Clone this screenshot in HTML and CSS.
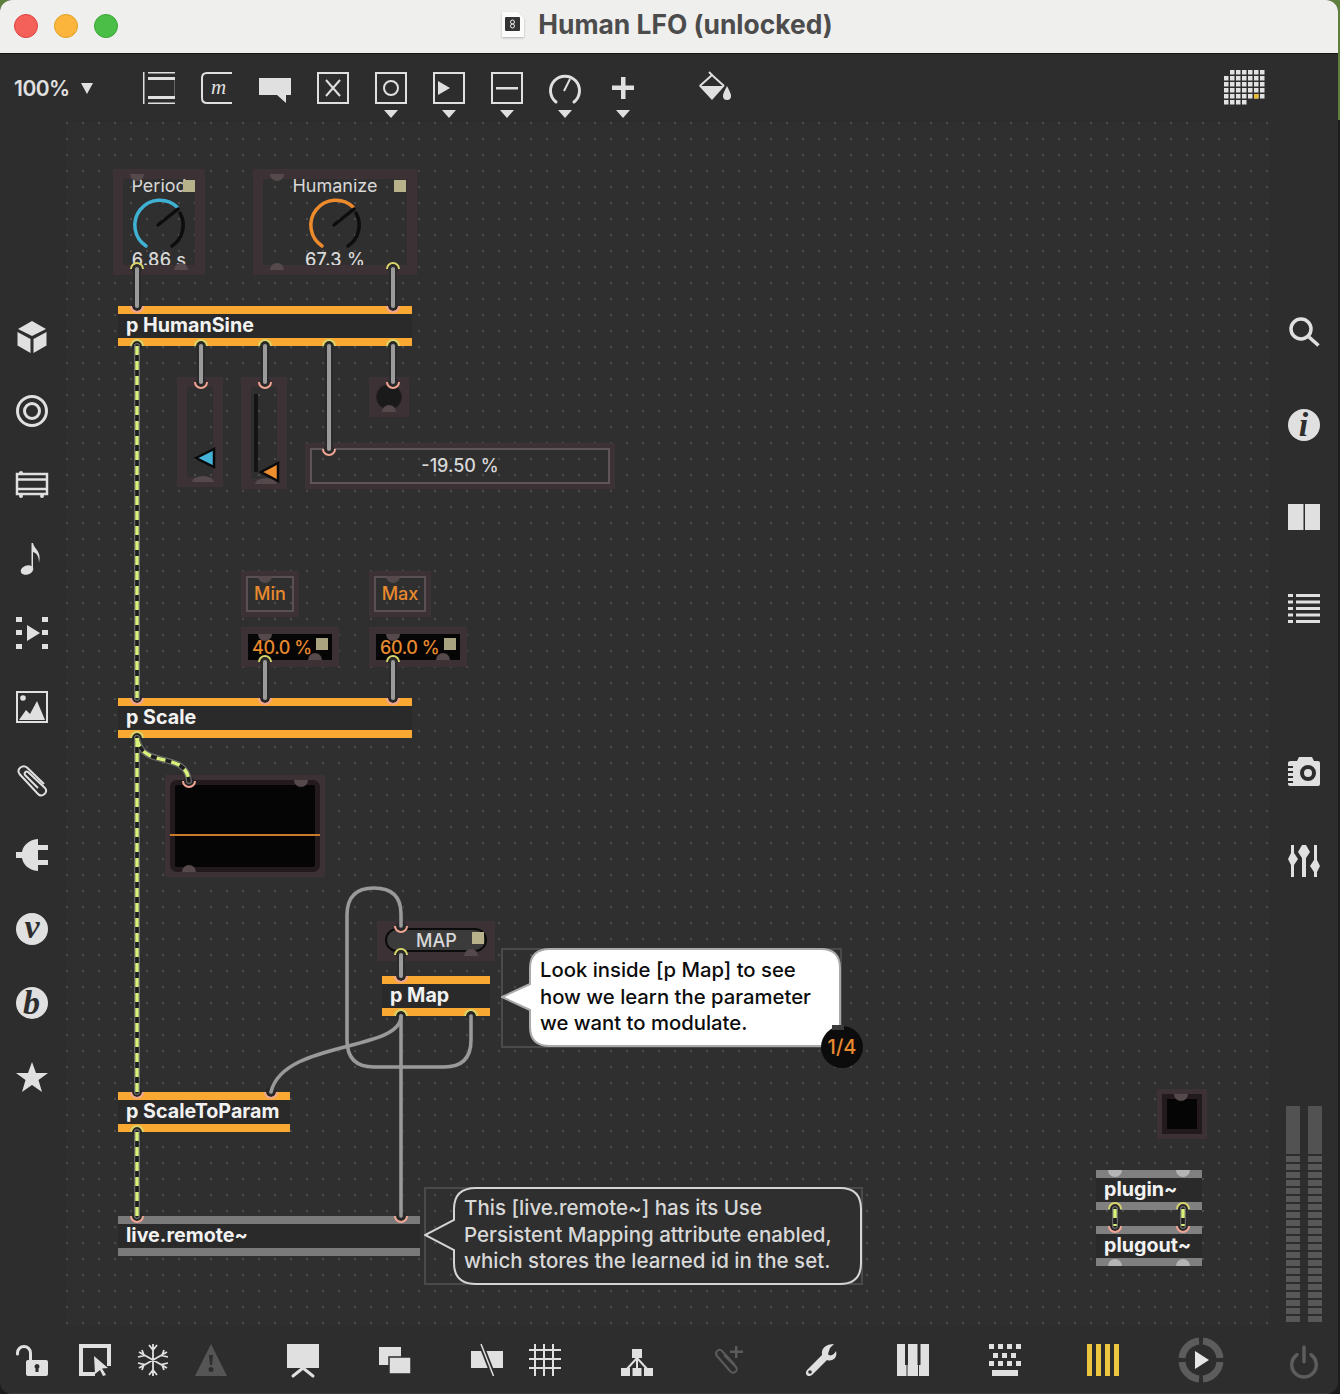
FILE: index.html
```html
<!DOCTYPE html>
<html lang="en">
<head>
    <meta charset="UTF-8">
    <title>Human LFO (unlocked)</title>
    <link rel="stylesheet" href="styles.css">
</head>
<body>
<div class="window">
    <div class="titlebar">
        <div class="lights">
            <span class="light red"></span>
            <span class="light yellow"></span>
            <span class="light green"></span>
        </div>
        <div class="title">
            <svg class="doc" viewBox="0 0 22 26"><path class="doc-page" d="M0 1H16L22 7V26H0Z"/><rect class="doc-dark" x="3" y="6" width="15" height="14" rx="1"/><circle class="doc-ring" cx="10.500" cy="11" r="2"/><circle class="doc-ring" cx="10.500" cy="15" r="2"/></svg>
            <span>Human LFO (unlocked)</span>
        </div>
    </div>

    <div class="toolbar">
        <div class="zoom"><span>100%</span><i class="zoom-arrow"></i></div>
        <div class="tool"><svg class="ico" viewBox="0 0 32 32"><rect width="1.5" height="32"/><rect x="5" width="27" height="1.5"/><rect x="5" y="5" width="27" height="3"/><rect x="5" y="24" width="27" height="3"/><rect x="5" y="30.500" width="27" height="1.500"/><rect class="dim" x="31" y="8" width="1" height="16"/></svg></div>
        <div class="tool"><svg class="ico" viewBox="0 0 32 32"><path class="line" d="M31 1H6Q1 1 1 6V26Q1 31 6 31H31"/><text class="glyph-m" x="10" y="22">m</text></svg></div>
        <div class="tool"><svg class="ico" viewBox="0 0 32 32"><path d="M0 6H32V23H27V31L18 23H0Z"/></svg></div>
        <div class="tool"><svg class="ico" viewBox="0 0 32 32"><rect class="line" x="1" y="1" width="30" height="30"/><path class="line" d="M9 8L23 24M23 8L9 24"/></svg></div>
        <div class="tool has-drop"><svg class="ico" viewBox="0 0 32 32"><rect class="line" x="1" y="1" width="30" height="30"/><circle class="line" cx="16" cy="16" r="7"/></svg><i class="drop"></i></div>
        <div class="tool has-drop"><svg class="ico" viewBox="0 0 32 32"><rect class="line" x="1" y="1" width="30" height="30"/><path d="M5 9L17 16L5 23Z"/></svg><i class="drop"></i></div>
        <div class="tool has-drop"><svg class="ico" viewBox="0 0 32 32"><rect class="line" x="1" y="1" width="30" height="30"/><rect x="5" y="15" width="22" height="2.500"/></svg><i class="drop"></i></div>
        <div class="tool has-drop"><svg class="ico" viewBox="0 0 32 32"><path class="line-thick" d="M7 30A14.500 14.500 0 1 1 25 30"/><path class="line" d="M15 19L21 7"/></svg><i class="drop"></i></div>
        <div class="tool has-drop"><svg class="ico" viewBox="0 0 32 32"><rect x="14" y="5" width="4.500" height="22"/><rect x="5" y="13.500" width="22" height="4.500"/></svg><i class="drop"></i></div>
        <div class="tool far"><svg class="ico" viewBox="0 0 32 32"><path class="line" d="M0.800 14L13 3L25 14"/><path d="M0 14H25.500L13 28Z"/><path d="M10 0L13 3" class="line"/><path d="M28 14C25 20 24 22 24 24A4 4 0 0 0 32 24C32 22 31 20 28 14Z"/></svg></div>
        <svg class="dots-grid" viewBox="0 0 40 37">
            <defs><pattern id="cells" width="6" height="6" patternUnits="userSpaceOnUse"><rect width="4.500" height="4.500"/></pattern></defs>
            <rect class="cells" x="6" y="0" width="36" height="6"/>
            <rect class="cells" x="0" y="6" width="42" height="24"/>
            <rect class="cells" x="0" y="30" width="24" height="6"/>
            <rect class="cell-on" x="30" y="24" width="4.500" height="4.500"/>
        </svg>
    </div>

    <div class="middle">
        <div class="side-left">
            <svg class="ico" viewBox="0 0 32 32"><path d="M16 0L30 8L16 15L2 8ZM1.500 11L14.500 18V32L1.500 24.500ZM30.500 11V24.500L17.500 32V18Z"/></svg>
            <svg class="ico" viewBox="0 0 32 32"><circle class="line-thick" cx="16" cy="16" r="14.500"/><circle class="line-thick" cx="16" cy="16" r="7.500"/></svg>
            <svg class="ico" viewBox="0 0 32 32"><rect class="line-film" x="1" y="5" width="30" height="20"/><path class="line-film" d="M2 10.500H30M2 20H30"/><circle cx="5" cy="4" r="2"/><circle cx="5" cy="27" r="2"/><circle cx="26" cy="27" r="2"/></svg>
            <svg class="ico" viewBox="0 0 32 32"><ellipse cx="11" cy="27" rx="6.500" ry="4.500" transform="rotate(-20 11 27)"/><path d="M15.500 0H17C18 6 26 8 23 20C23 12 20 10 17 9V27H15.500Z"/></svg>
            <svg class="ico" viewBox="0 0 32 32"><path d="M0 0H6V5H0ZM0 13H6V18H0ZM0 27H6V32H0ZM26 0H32V5H26ZM26 13H32V18H26ZM26 27H32V32H26ZM11 8L24 16L11 24Z"/></svg>
            <svg class="ico" viewBox="0 0 32 32"><rect class="line" x="1" y="1" width="30" height="30"/><circle cx="7" cy="7" r="2.800"/><path d="M3 29L10 19L14 23L21 10L29 29Z"/></svg>
            <svg class="ico" viewBox="0 0 32 32"><path class="line" d="M28 19L11 2.500C7 -1 0 4 3.500 9L22 29C26 33 33 27 29 23L12 7C10 5.500 7.500 8 9 10L22 23"/></svg>
            <svg class="ico" viewBox="0 0 32 32"><path d="M0 13H6C7 7 12 1 22 0V32C12 31 7 25 6 19H0ZM22 6H32V11H22ZM22 21H32V26H22Z"/></svg>
            <svg class="ico" viewBox="0 0 32 32"><circle cx="16" cy="16" r="16"/><text class="glyph-cut" x="16" y="25">v</text></svg>
            <svg class="ico" viewBox="0 0 32 32"><circle cx="16" cy="16" r="16"/><text class="glyph-cut" x="15.500" y="27">b</text></svg>
            <svg class="ico" viewBox="0 0 32 32"><path d="M16 1L20 12H32L22.500 19L26 31L16 24L6 31L9.500 19L0 12H12Z"/></svg>
        </div>

        <div class="canvas">
            <div class="patch">
                <div class="frame dial-box period">
                    <span class="dial-label">Period</span>
                    <svg class="dial" viewBox="0 0 56 56"><path class="arc-off" d="M49 16A25 25 0 0 1 41 49"/><path class="arc-blue" d="M15 49A25 25 0 1 1 46 10"/><path class="needle" d="M27 28L47 12"/></svg>
                    <span class="dial-value">6.86 s</span>
                    <i class="param-dot"></i>
                </div>
                <div class="frame dial-box humanize">
                    <span class="dial-label">Humanize</span>
                    <svg class="dial" viewBox="0 0 56 56"><path class="arc-off" d="M49 16A25 25 0 0 1 41 49"/><path class="arc-orange" d="M15 49A25 25 0 1 1 46 10"/><path class="needle" d="M27 28L47 12"/></svg>
                    <span class="dial-value">67.3 %</span>
                    <i class="param-dot"></i>
                </div>

                <div class="obj orange humansine">p HumanSine</div>

                <div class="frame slider-a"></div>
                <div class="frame slider-b"><i class="slider-track"></i></div>
                <div class="frame toggle"><i class="toggle-dot"></i></div>
                <div class="numbox percent">-19.50 %</div>

                <div class="msg min">Min</div>
                <div class="msg max">Max</div>
                <div class="numdark low"><span>40.0 %</span><i class="param-dot dark"></i></div>
                <div class="numdark high"><span>60.0 %</span><i class="param-dot dark"></i></div>

                <div class="obj orange scale">p Scale</div>

                <div class="scope"><div class="scope-mid"><div class="scope-in"></div></div><i class="scope-line"></i></div>

                <div class="map-box"><div class="map-pill">MAP<i class="param-dot map"></i></div></div>
                <div class="obj orange pmap">p Map</div>
                <div class="obj orange toparam">p ScaleToParam</div>
                <div class="obj grey remote">live.remote~</div>

                <div class="note note-white">
                    <svg class="note-shape" viewBox="0 0 341 100"><path class="note-fill" d="M49 1H320Q339 1 339 20V79Q339 98 320 98H49Q29 98 29 79V62L1 49L29 36V20Q29 1 49 1Z"/></svg>
                    <p>Look inside [p Map] to see<br>how we learn the parameter<br>we want to modulate.</p>
                </div>
                <div class="badge">1/4</div>

                <div class="note note-dark">
                    <svg class="note-shape" viewBox="0 0 439 98"><path class="note-line" d="M52 1H416Q437 1 437 22V76Q437 97 416 97H52Q30 97 30 76V63L1 48L30 33V22Q30 1 52 1Z"/></svg>
                    <p>This [live.remote~] has its Use<br>Persistent Mapping attribute enabled,<br>which stores the learned id in the set.</p>
                </div>

                <div class="empty-obj"><div class="empty-in"></div></div>
                <div class="obj grey pale-bar plugin">plugin~</div>
                <div class="obj grey pale-bar plugout">plugout~</div>

                <svg class="wires" viewBox="0 0 1340 1394">
                    <defs>
                        <path id="nub-down" d="M-7 0A7 7 0 0 0 7 0Z"/>
                        <path id="nub-up" d="M-7 0A7 7 0 0 1 7 0Z"/>
                        <path id="nub-wide" d="M-11 0A11 6 0 0 1 11 0Z"/>
                        <g id="in"><circle r="5"/><path class="arc-in" d="M-6 0A6 6 0 0 0 6 0"/></g>
                        <g id="out"><circle r="5"/><path class="arc-out" d="M-6 0A6 6 0 0 1 6 0"/></g>
                        <g id="grey-cords">
                            <path d="M137 269V306"/><path d="M393 269V306"/>
                            <path d="M201 346V382"/><path d="M265 346V382"/>
                            <path d="M329 346V449"/><path d="M393 346V382"/>
                            <path d="M265 662V698"/><path d="M393 662V698"/>
                            <path d="M401 955V976"/>
                        </g>
                        <g id="thin-cords">
                            <path d="M401 926V914Q401 888 374 888Q347 888 347 915V1040Q347 1067 374 1067H444Q471 1067 471 1040V1016"/>
                            <path d="M401 1016C401 1052 283 1040 271 1092"/>
                            <path d="M401 1016V1216"/>
                        </g>
                        <g id="signal-cords">
                            <path d="M137 346V698"/>
                            <path d="M137 738V1092"/>
                            <path d="M137 738C142 770 186 750 189 781"/>
                            <path d="M137 1132V1216"/>
                            <path d="M1115 1209V1226"/>
                            <path d="M1183 1209V1226"/>
                        </g>
                    </defs>

                    <g class="nubs">
                        <use href="#nub-down" x="137" y="174"/><use href="#nub-up" x="181" y="270"/>
                        <use href="#nub-down" x="277" y="174"/><use href="#nub-up" x="277" y="270"/>
                        <use href="#nub-wide" x="203" y="482"/><use href="#nub-wide" x="266" y="484"/>
                        <use href="#nub-up" x="389" y="412"/>
                        <use href="#nub-down" x="265" y="576"/><use href="#nub-down" x="393" y="576"/>
                        <use href="#nub-down" x="265" y="634"/><use href="#nub-up" x="315" y="660"/>
                        <use href="#nub-down" x="393" y="634"/><use href="#nub-up" x="443" y="660"/>
                        <use href="#nub-down" x="301" y="780"/><use href="#nub-up" x="189" y="872"/>
                        <use href="#nub-up" x="471" y="956"/>
                        <use href="#nub-down" x="1181" y="1094"/>
                    </g>
                    <g class="nubs pale">
                        <use href="#nub-down" x="1115" y="1170"/><use href="#nub-down" x="1183" y="1170"/>
                        <use href="#nub-up" x="1115" y="1266"/><use href="#nub-up" x="1183" y="1266"/>
                    </g>

                    <g class="triangles">
                        <path class="tri-blue" d="M196 458L214 449V467Z"/>
                        <path class="tri-orange" d="M261 472L278 463V481Z"/>
                    </g>

                    <g class="ports">
                        <use href="#out" x="137" y="269"/><use href="#out" x="393" y="269"/>
                        <use href="#in" x="137" y="306"/><use href="#in" x="393" y="306"/>
                        <use href="#out" x="137" y="346"/><use href="#out" x="201" y="346"/><use href="#out" x="265" y="346"/><use href="#out" x="329" y="346"/><use href="#out" x="393" y="346"/>
                        <use href="#in" x="201" y="382"/><use href="#in" x="265" y="382"/><use href="#in" x="393" y="382"/>
                        <use href="#in" x="329" y="449"/>
                        <use href="#out" x="265" y="662"/><use href="#out" x="393" y="662"/>
                        <use href="#in" x="137" y="698"/><use href="#in" x="265" y="698"/><use href="#in" x="393" y="698"/>
                        <use href="#out" x="137" y="738"/>
                        <use href="#in" x="189" y="781"/>
                        <use href="#in" x="401" y="926"/><use href="#out" x="401" y="955"/>
                        <use href="#in" x="401" y="976"/>
                        <use href="#out" x="401" y="1016"/><use href="#out" x="471" y="1016"/>
                        <use href="#in" x="137" y="1092"/><use href="#in" x="271" y="1092"/>
                        <use href="#out" x="137" y="1132"/>
                        <use href="#in" x="137" y="1216"/><use href="#in" x="401" y="1216"/>
                        <use href="#out" x="1115" y="1209"/><use href="#out" x="1183" y="1209"/>
                        <use href="#in" x="1115" y="1226"/><use href="#in" x="1183" y="1226"/>
                    </g>

                    <use class="cord-edge" href="#grey-cords"/>
                    <use class="cord-core" href="#grey-cords"/>
                    <use class="thin-edge" href="#thin-cords"/>
                    <use class="thin-core" href="#thin-cords"/>
                    <use class="signal-edge" href="#signal-cords"/>
                    <use class="signal-base" href="#signal-cords"/>
                    <use class="signal-dash" href="#signal-cords"/>
                </svg>
            </div>
        </div>

        <div class="side-right">
            <svg class="ico" viewBox="0 0 32 32"><circle class="line-search" cx="13" cy="12" r="10"/><path class="line-search" d="M21 20L30.500 28.500"/></svg>
            <svg class="ico" viewBox="0 0 32 32"><circle cx="16" cy="16" r="16"/><text class="glyph-cut" x="15.500" y="27">i</text></svg>
            <svg class="ico" viewBox="0 0 32 32"><path d="M0 3H15.500V29H0ZM17 3H32V29H17Z"/></svg>
            <svg class="ico" viewBox="0 0 32 32"><path d="M0 1H5V4H0ZM8 1H32V4H8ZM0 7.500H5V10.500H0ZM8 7.500H32V10.500H8ZM0 14H5V17H0ZM8 14H32V17H8ZM0 20.500H5V23.500H0ZM8 20.500H32V23.500H8ZM0 27H5V30H0ZM8 27H32V30H8Z"/></svg>
            <svg class="ico camera" viewBox="0 0 32 32"><path fill-rule="evenodd" d="M3 6H9L11 2H24L26 6H30Q32 6 32 8V29Q32 31 30 31H2Q0 31 0 29V8Q0 6 3 6ZM0 11V13H5V11ZM0 16V18H5V16ZM0 21V23H5V21ZM0 26V28H5V26ZM20 10A8 8 0 1 0 20 26A8 8 0 1 0 20 10ZM20 14A4 4 0 1 1 20 22A4 4 0 1 1 20 14Z"/></svg>
            <svg class="ico mixer" viewBox="0 0 32 32"><path d="M3 0H6V8L10 14L6 20V32H3V20L0 14L3 8ZM15 0H18L22 7L18 13V32H14V13L10 7L14 0ZM26 0H29V15L32 21L29 27V32H26V27L22 21L26 15Z"/></svg>
            <div class="meter">
                <div class="meter-col"><div class="meter-top"></div><div class="meter-segs"></div></div>
                <div class="meter-col"><div class="meter-top"></div><div class="meter-segs"></div></div>
            </div>
        </div>
    </div>

    <div class="bottombar">
        <svg class="ico" viewBox="0 0 32 32"><path class="line-thick" d="M1.500 10V9A6.500 6.500 0 0 1 14.500 9V18"/><path fill-rule="evenodd" d="M12 16H30Q32 16 32 18V30Q32 32 30 32H12Q10 32 10 30V18Q10 16 12 16ZM21 20A2.500 2.500 0 0 0 19.500 24.500V28H22.500V24.500A2.500 2.500 0 0 0 21 20Z"/></svg>
        <svg class="ico after-lock" viewBox="0 0 32 32"><path d="M0 0H32V22H28V4H4V28H16V32H0Z"/><path d="M15 12L29 24L23 24.500L27 31L24 32L21 26L16 30Z"/></svg>
        <svg class="ico" viewBox="0 0 32 32"><path class="line-snow" d="M16 0V32M2 8L30 24M2 24L30 8M12 1L16 6L20 1M12 31L16 26L20 31M1 13L7 11.500L5 6M31 19L25 20.500L27 26M1 19L7 20.500L5 26M31 13L25 11.500L27 6"/></svg>
        <svg class="ico muted-dark" viewBox="0 0 32 32"><path fill-rule="evenodd" d="M16 0L32 32H0ZM14 11L15 21H17L18 11ZM16 23A2.500 2.500 0 1 0 16 28A2.500 2.500 0 1 0 16 23Z"/></svg>
        <svg class="ico far" viewBox="0 0 32 32"><path d="M0 0H32V24H0Z"/><path class="line-thick" d="M16 24L6 32M16 24L26 32"/></svg>
        <svg class="ico far" viewBox="0 0 32 32"><path d="M0 3H22V21H0Z"/><path class="halo" d="M10 13H32V30H10Z"/></svg>
        <svg class="ico far" viewBox="0 0 32 32"><rect y="7" width="32" height="17"/><path class="slash-halo" d="M10 0L22.500 32"/><path class="line-slash" d="M10 0L22.500 32"/></svg>
        <svg class="ico" viewBox="0 0 32 32"><path class="line" d="M0 6H32M0 15H32M0 24H32M6 0V32M15 0V32M24 0V32" /></svg>
        <svg class="ico far" viewBox="0 0 32 32"><path d="M11 5H21V14H11ZM0 24H9V32H0ZM11.500 24H20.500V32H11.500ZM23 24H32V32H23Z"/><path class="line" d="M16 12V26M16 14L5 26M16 14L27 26"/></svg>
        <svg class="ico muted far" viewBox="0 0 32 32"><path class="line" d="M22 21L9 7C6 4 1 8 4 12L17 27C20 31 26 27 23 23L11 11"/><rect x="22" y="2" width="2.500" height="12"/><rect x="17" y="6.500" width="13" height="2.500"/></svg>
        <svg class="ico far" viewBox="0 0 32 32"><path d="M31 7C29 11 25 13 23 10L25 4L29 0C21 0 16 4 17 11L2 26C-1 30 3 34 7 31L22 16C27 18 33 14 31 7Z"/><circle class="hole" cx="5" cy="28" r="1.800"/></svg>
        <svg class="ico far" viewBox="0 0 32 32"><rect width="32" height="32"/><path class="slot" d="M9.500 0V21M22 0V21"/><path class="slot-thin" d="M10 21V32M21.500 21V32"/></svg>
        <svg class="ico far" viewBox="0 0 32 32"><path d="M0 0H5V5H0ZM9 0H14V5H9ZM18 0H23V5H18ZM27 0H32V5H27ZM4 9H9V14H4ZM13 9H18V14H13ZM22 9H27V14H22ZM0 17H5V22H0ZM9 17H14V22H9ZM18 17H23V22H18ZM27 17H32V22H27ZM3 26H29V32H3Z"/></svg>
        <svg class="ico bars far-more" viewBox="0 0 32 32"><path d="M0 0H5V32H0ZM9 0H14V32H9ZM18 0H23V32H18ZM27 0H32V32H27Z"/></svg>
        <svg class="ico play" viewBox="0 0 46 46"><path class="ring" d="M21 4A19 19 0 0 0 4 21M25 4A19 19 0 0 1 42 21M4 25A19 19 0 0 0 21 42M42 25A19 19 0 0 1 25 42"/><path class="play-tri" d="M17 14L31 23L17 32Z"/></svg>
        <svg class="ico power" viewBox="0 0 32 32"><path class="line-power" d="M8 10A14 14 0 1 0 24 10M16 1V18"/></svg>
    </div>
</div>
</body>
</html>
```

FILE: styles.css
```css
* {
    box-sizing: border-box;
}
html, body {
    margin: 0;
    height: 100%;
}
body {
    width: 1340px;
    height: 1394px;
    overflow: hidden;
    background: linear-gradient(#5f7f3c 0 120px, #1d1d1d 120px);
    font-family: Inter, "Liberation Sans", sans-serif;
}
.window {
    width: 1338px;
    height: 1394px;
    display: flex;
    flex-direction: column;
    background: #2d2d2d;
    border-radius: 12px;
    overflow: hidden;
}

/* title bar */
.titlebar {
    flex: none;
    height: 54px;
    position: relative;
    display: flex;
    align-items: center;
    justify-content: center;
    background: #efefed;
    border-bottom: 1px solid #141414;
}
.lights {
    position: absolute;
    left: 14px;
    top: 14px;
    display: flex;
    gap: 16px;
}
.light {
    width: 24px;
    height: 24px;
    border-radius: 50%;
}
.red { background: #f4605a; border: 1px solid #e0443e; }
.yellow { background: #fbb53c; border: 1px solid #dfa023; }
.green { background: #4bbe47; border: 1px solid #3aa637; }
.title {
    display: flex;
    align-items: center;
    gap: 14px;
    margin: -5px 0 0 -3px;
    font-size: 26.400px;
    font-weight: 700;
    color: #4c4c4c;
}
.doc {
    flex: none;
    width: 22px;
    height: 26px;
    filter: drop-shadow(0 1px 1px rgba(0, 0, 0, 0.25));
}
.doc-page { fill: #fbfbfb; }
.doc-dark { fill: #333; }
.doc-ring { fill: none; stroke: #e8e8e8; stroke-width: 1; }

/* icons */
.ico {
    flex: none;
    width: 32px;
    height: 32px;
    fill: #e0e0e0;
    overflow: visible;
}
.line, .line-thick, .line-film, .line-search, .line-snow, .line-power, .line-slash {
    fill: none;
    stroke: #e0e0e0;
    stroke-width: 2;
}
.line-thick { stroke-width: 3; stroke-linecap: round; }
.line-film { stroke-width: 2.500; }
.line-search { stroke-width: 3.500; }
.line-snow { stroke-width: 1.800; }
.line-power { stroke: #5d5d5d; stroke-width: 4; stroke-linecap: round; }
.line-slash { stroke-width: 1.500; }
.slash-halo { fill: none; stroke: #2d2d2d; stroke-width: 5; }
.halo { stroke: #2d2d2d; stroke-width: 1.500; }
.slot { fill: none; stroke: #2d2d2d; stroke-width: 3; }
.slot-thin { fill: none; stroke: #2d2d2d; stroke-width: 1; }
.dim { fill: #666; }
.hole { fill: #2d2d2d; }
.glyph-m {
    font-family: "Liberation Serif", serif;
    font-style: italic;
    font-size: 21px;
}
.glyph-cut {
    font-family: "Liberation Serif", serif;
    font-style: italic;
    font-weight: 700;
    font-size: 34px;
    text-anchor: middle;
    fill: #2d2d2d;
}
.muted { fill: #5b5b5b; }
.muted .line { stroke: #5b5b5b; }
.muted-dark { fill: #555; }
.bars { fill: #ebc63e; }
.ring { fill: none; stroke: #5c5c5c; stroke-width: 7; }
.play-tri { fill: #e6e6e6; }

/* top toolbar */
.toolbar {
    flex: none;
    height: 68px;
    display: flex;
    gap: 26px;
    padding: 18px 0 0 14px;
}
.zoom {
    width: 103px;
    height: 32px;
    display: flex;
    align-items: center;
    gap: 11px;
    font-size: 21px;
    font-weight: 600;
    letter-spacing: -0.5px;
    color: #e0e0e0;
}
.zoom-arrow {
    width: 0;
    height: 0;
    border-left: 6px solid transparent;
    border-right: 6px solid transparent;
    border-top: 11px solid #e0e0e0;
}
.tool {
    width: 32px;
    display: flex;
    flex-direction: column;
    align-items: center;
    gap: 6px;
}
.tool.far {
    margin-left: 34px;
}
.drop {
    width: 0;
    height: 0;
    border-left: 7px solid transparent;
    border-right: 7px solid transparent;
    border-top: 8px solid #e0e0e0;
}
.dots-grid {
    width: 40px;
    height: 37px;
    margin: -2px 74px 0 auto;
    overflow: visible;
}
.cells { fill: url(#cells); }
#cells rect { fill: #e2e2e2; }
.cell-on { fill: #e8bd34; }

/* middle row */
.middle {
    flex: none;
    height: 1204px;
    display: flex;
}
.side-left {
    flex: none;
    width: 66px;
    display: flex;
    flex-direction: column;
    gap: 42px;
    padding: 199px 0 0 16px;
}
.side-right {
    flex: none;
    width: 68px;
    display: flex;
    flex-direction: column;
    gap: 60px;
    padding: 195px 0 4px 18px;
}
.camera { margin-top: 70px; }
.mixer { margin-top: -2px; }
.meter {
    margin: auto 0 0 -2px;
    display: flex;
    gap: 8px;
}
.meter-col {
    width: 14px;
    height: 216px;
    display: flex;
    flex-direction: column;
    gap: 2px;
}
.meter-top {
    height: 48px;
    background: #525252;
}
.meter-segs {
    flex: 1;
    background: repeating-linear-gradient(#585858 0 6px, transparent 6px 8px);
}

/* patcher canvas */
.canvas {
    flex: none;
    width: 1204px;
    position: relative;
    background-color: #2f2f2f;
    background-image: radial-gradient(circle at 1px 1px, #4c4c4c 1px, transparent 1.300px);
    background-size: 16px 16px;
}
.patch {
    position: absolute;
    left: -66px;
    top: -122px;
    width: 1340px;
    height: 1394px;
    font-size: 18px;
    font-weight: 500;
    color: #d8d8d8;
}
.patch > div {
    position: absolute;
}
.wires {
    position: absolute;
    left: 0;
    top: 0;
    width: 1340px;
    height: 1394px;
    pointer-events: none;
}
.frame {
    border: 10px solid #3c3134;
}

/* dials */
.dial-box {
    top: 169px;
    height: 106px;
    display: flex;
    flex-direction: column;
    align-items: center;
    overflow: hidden;
}
.period { left: 113px; width: 92px; }
.humanize { left: 253px; width: 164px; }
.dial-label {
    flex: none;
    height: 13px;
    line-height: 13px;
    font-weight: 400;
}
.dial {
    flex: none;
    width: 56px;
    height: 56px;
    margin: 5px 0 -4px;
    overflow: visible;
}
.dial-value {
    flex: none;
    height: 16px;
    line-height: 16px;
    margin-top: 3px;
    letter-spacing: 0.3px;
}
.arc-off, .arc-blue, .arc-orange {
    fill: none;
    stroke-width: 3.500;
    stroke-linecap: round;
}
.arc-off { stroke: #0d0d0d; }
.arc-blue { stroke: #3fb2d4; }
.arc-orange { stroke: #ec8a2c; }
.needle {
    fill: none;
    stroke: #0d0d0d;
    stroke-width: 3.500;
    stroke-linecap: round;
}
.param-dot {
    position: absolute;
    width: 12px;
    height: 12px;
    background: #b7b28a;
}
.period .param-dot { left: 60px; top: 1px; }
.humanize .param-dot { left: 131px; top: 1px; }

/* patcher objects */
.obj {
    height: 40px;
    padding-left: 8px;
    line-height: 22px;
    font-size: 19.700px;
    font-weight: 700;
    color: #f2f2f2;
    background: #2a2a2a;
}
.orange {
    border-top: 8px solid #f9a832;
    border-bottom: 8px solid #f9a832;
}
.grey {
    border-top: 8px solid #7a7a7a;
    border-bottom: 8px solid #7a7a7a;
}
.pale-bar {
    border-color: #808080;
}
.humansine { left: 118px; top: 306px; width: 294px; }
.scale { left: 118px; top: 698px; width: 294px; }
.pmap { left: 382px; top: 976px; width: 108px; }
.toparam { left: 118px; top: 1092px; width: 172px; }
.remote { left: 118px; top: 1216px; width: 302px; }
.plugin { left: 1096px; top: 1170px; width: 106px; }
.plugout { left: 1096px; top: 1226px; width: 106px; }

/* sliders, toggle, number */
.slider-a { left: 177px; top: 377px; width: 46px; height: 110px; }
.slider-b { left: 241px; top: 377px; width: 46px; height: 112px; }
.slider-track {
    display: block;
    width: 4px;
    height: 78px;
    margin: 7px 0 0 3px;
    background: #141414;
}
.toggle { left: 369px; top: 377px; width: 40px; height: 40px; }
.toggle-dot {
    display: block;
    width: 26px;
    height: 26px;
    margin: -3px;
    border-radius: 50%;
    background: #1a1a1a;
    border: 1px solid #2a2022;
}
.numbox {
    left: 305px;
    top: 443px;
    width: 310px;
    height: 46px;
    padding-bottom: 2px;
    display: flex;
    align-items: center;
    justify-content: center;
    border: 5px solid #3c3134;
    outline: 2px solid #5f5558;
    outline-offset: -7px;
}
.msg {
    top: 571px;
    height: 46px;
    padding-bottom: 2px;
    display: flex;
    align-items: center;
    justify-content: center;
    color: #e8892e;
    border: 5px solid #3c3134;
    outline: 2px solid #5a5053;
    outline-offset: -7px;
}
.min { left: 241px; width: 58px; }
.max { left: 369px; width: 62px; }
.numdark {
    top: 627px;
    height: 40px;
    line-height: 28px;
    letter-spacing: -0.4px;
    color: #e8892e;
    border: 7px solid #3c3134;
    background: #060606;
}
.numdark span {
    display: block;
    margin-left: 4px;
}
.low { left: 241px; width: 98px; }
.high { left: 369px; width: 98px; }
.param-dot.dark {
    right: 4px;
    top: 4px;
    background: #a9a47f;
}

/* scope */
.scope {
    left: 165px;
    top: 775px;
    width: 160px;
    height: 102px;
    padding: 5px;
    background: #3c3134;
}
.scope-mid {
    height: 100%;
    padding: 5px;
    border-radius: 7px;
    background: #221a1c;
}
.scope-in {
    height: 100%;
    border-radius: 2px;
    background: #050505;
}
.scope-line {
    position: absolute;
    left: 5px;
    right: 5px;
    top: 59px;
    height: 2px;
    background: #c9792a;
}

/* MAP button */
.map-box {
    left: 377px;
    top: 921px;
    width: 118px;
    height: 40px;
    padding: 7px 8px;
    background: #3c3134;
}
.map-pill {
    position: relative;
    height: 24px;
    padding-left: 29px;
    line-height: 22px;
    border: 2px solid #0c0c0c;
    border-radius: 12px;
    background: #3b3b3b;
}
.param-dot.map {
    left: 85px;
    top: 2px;
}

/* comments */
.note {
    border: 2px solid #4a4a4a;
}
.note-shape {
    position: absolute;
    left: -2px;
    top: -2px;
    width: calc(100% + 4px);
    height: calc(100% + 4px);
}
.note p {
    position: relative;
    margin: 0;
    font-size: 20.300px;
    line-height: 26.500px;
}
.note-white {
    left: 501px;
    top: 948px;
    width: 341px;
    height: 100px;
    color: #0c0c0c;
}
.note-white p { padding: 7px 0 0 37px; }
.note-fill {
    fill: #fff;
    stroke: #aaa;
    stroke-width: 2;
}
.note-dark {
    left: 424px;
    top: 1187px;
    width: 439px;
    height: 98px;
    color: #d8d8d8;
}
.note-dark p {
    padding: 6px 0 0 38px;
    font-size: 20.500px;
}
.note-line {
    fill: #2f2f2f;
    stroke: #d4d4d4;
    stroke-width: 2;
}
.badge {
    left: 821px;
    top: 1026px;
    width: 42px;
    height: 42px;
    display: flex;
    align-items: center;
    justify-content: center;
    border-radius: 50%;
    background: #0c0c0c;
    color: #e8892e;
    font-size: 20px;
}
.badge::before {
    content: "";
    position: absolute;
    left: 11px;
    top: -1px;
    width: 12px;
    height: 5px;
    background: #3a3a3a;
}
.empty-obj {
    left: 1157px;
    top: 1089px;
    width: 50px;
    height: 50px;
    padding: 10px;
    border: 5px solid #3c3134;
    background: #221a1c;
}
.empty-in {
    position: absolute;
    inset: 5px;
    background: #050505;
}

/* ports and cords */
.nubs { fill: #55494c; }
.nubs.pale { fill: #b5b5b5; }
.tri-blue, .tri-orange {
    stroke: #0a0a0a;
    stroke-width: 2.500;
    stroke-linejoin: miter;
}
.tri-blue { fill: #43b4d8; }
.tri-orange { fill: #ef8e2e; }
.ports { fill: #262626; }
.arc-in, .arc-out {
    fill: none;
    stroke-width: 2;
}
.arc-in { stroke: #f0a594; }
.arc-out { stroke: #d6d46a; }
.cord-edge, .cord-core, .thin-edge, .thin-core, .signal-edge, .signal-base, .signal-dash {
    fill: none;
    stroke-linecap: round;
}
.cord-edge { stroke: #2b2b2b; stroke-width: 8; }
.cord-core { stroke: #9b9b9b; stroke-width: 4; }
.thin-edge { stroke: #343434; stroke-width: 5; }
.thin-core { stroke: #9a9a9a; stroke-width: 3.500; }
.signal-edge { stroke: #6a6a6a; stroke-width: 6; }
.signal-base { stroke: #1e1e1e; stroke-width: 3.500; }
.signal-dash {
    stroke: #d9f27c;
    stroke-width: 3.500;
    stroke-linecap: butt;
    stroke-dasharray: 9 6;
}

/* bottom toolbar */
.bottombar {
    flex: none;
    height: 68px;
    display: flex;
    gap: 26px;
    padding: 18px 0 0 16px;
    border-bottom: 1px solid #3d3d3d;
}
.bottombar .far { margin-left: 34px; }
.after-lock { margin-left: 5px; }
.far-more { margin-left: 40px; }
.play {
    width: 46px;
    height: 46px;
    margin: -7px 0 0 33px;
}
.power {
    width: 28px;
    margin-left: 40px;
}
```
